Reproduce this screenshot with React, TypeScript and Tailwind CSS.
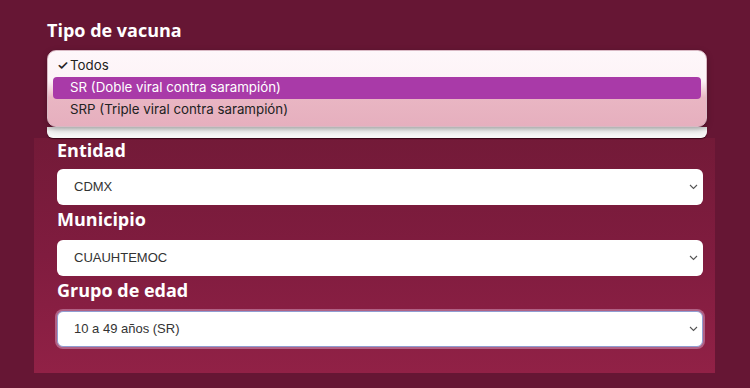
import React from "react";

const Chevron = () => (
  <svg width="9" height="6" viewBox="0 0 9 6" className="shrink-0">
    <polyline points="1,1 4.5,4.5 8,1" fill="none" stroke="#555" strokeWidth="1.1" />
  </svg>
);

function SelectBox({ value, focused }: { value: string; focused?: boolean }) {
  return (
    <div
      className={
        focused
          ? "flex items-center justify-between h-[36px] rounded-[6px] bg-white pl-[16px] pr-[4px] border border-[#8f9dd2] shadow-[0_0_0_2px_rgba(190,120,155,0.75)]"
          : "flex items-center justify-between h-[36px] rounded-[6px] bg-white pl-[17px] pr-[5px]"
      }
    >
      <span className="text-[13px] text-[#333] font-['Liberation_Sans',Arial,sans-serif]">{value}</span>
      <Chevron />
    </div>
  );
}

function Label({ children, first }: { children: React.ReactNode; first?: boolean }) {
  return (
    <div
      className={
        (first ? "" : "mt-[2px] ") +
        "h-[24px] leading-[24px] text-[18px] font-bold text-white font-['Open_Sans',sans-serif]"
      }
    >
      {children}
    </div>
  );
}

export default function App() {
  return (
    <div className="w-[750px] h-[388px] overflow-hidden bg-[#661634] font-['Open_Sans',sans-serif]">
      <div className="pt-[18px] pl-[47px] pr-[43px]">
        <div className="h-[24px] leading-[24px] text-[18px] font-bold text-white">Tipo de vacuna</div>
        <div className="mt-[8px] flex flex-col">
          <div className="relative z-10 h-[77px] rounded-[9px] border border-[#d9b9c4] bg-[linear-gradient(to_bottom,#fef7fa_0%,#fdf3f7_40%,#e9b6c3_62%,#e6afbe_100%)] shadow-[0_2px_6px_rgba(0,0,0,0.25)] px-[5px] pt-[4px] font-['Inter',sans-serif] text-[13.3px] text-[#222]">
            <div className="h-[22px] flex items-center pl-[4px]">
              <span className="w-[13px] text-[13px] font-semibold">✓</span>
              <span>Todos</span>
            </div>
            <div className="h-[22px] flex items-center pl-[17px] rounded-[4px] bg-[#a93aa8] text-white">
              SR (Doble viral contra sarampión)
            </div>
            <div className="h-[22px] flex items-center pl-[17px]">SRP (Triple viral contra sarampión)</div>
          </div>
          <div className="h-[11px] rounded-b-[6px] bg-[linear-gradient(to_bottom,#d8d8d8,#f2f2f2_40%,#f8f8f8)] shadow-[0_1px_1px_rgba(40,0,15,0.8)]" />
        </div>
      </div>
      <div className="ml-[34px] w-[681px] h-[235px] bg-[linear-gradient(to_bottom,#731a38,#801c3f_50%,#912146)] pl-[23px] pr-[12px]">
        <Label first>Entidad</Label>
        <div className="mt-[7px]">
          <SelectBox value="CDMX" />
        </div>
        <Label>Municipio</Label>
        <div className="mt-[9px]">
          <SelectBox value="CUAUHTEMOC" />
        </div>
        <Label>Grupo de edad</Label>
        <div className="mt-[9px]">
          <SelectBox value="10 a 49 años (SR)" focused />
        </div>
      </div>
    </div>
  );
}
